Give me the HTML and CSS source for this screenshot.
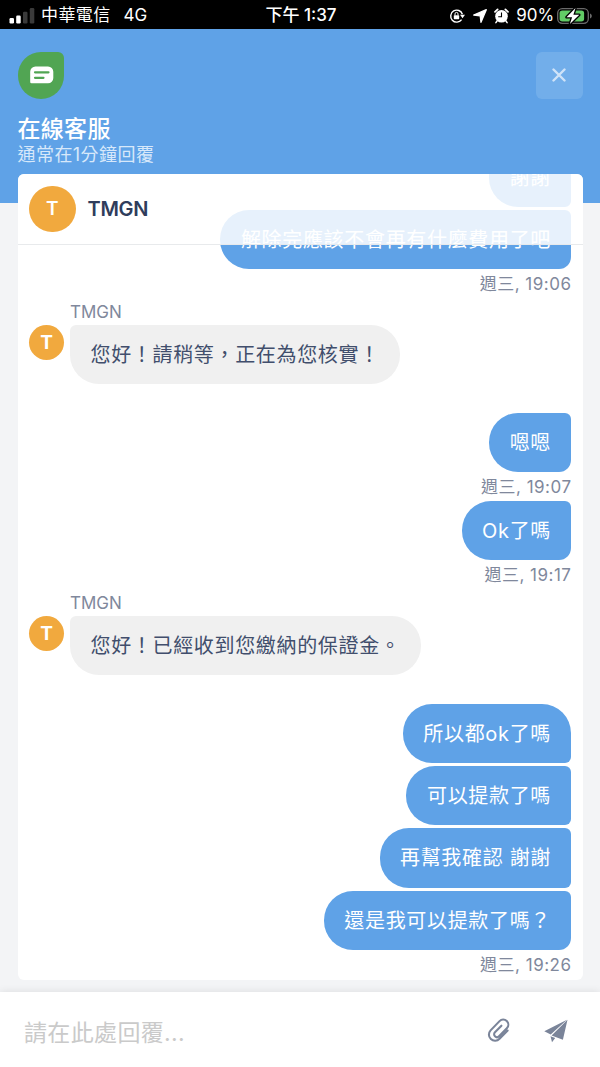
FILE: index.html
```html
<!DOCTYPE html>
<html lang="zh-Hant">
<head>
    <meta charset="UTF-8">
    <meta name="viewport" content="width=device-width, initial-scale=1.0">
    <title>在線客服</title>
    <link rel="stylesheet" href="styles.css">
</head>
<body>
    <div class="status-bar">
        <div class="status-left">
            <svg class="signal" width="26" height="17" viewBox="0 0 26 17">
                <rect x="0.5" y="11" width="4.5" height="5.5" rx="1.2" fill="#fff"/>
                <rect x="7.2" y="8.5" width="4.5" height="8" rx="1.2" fill="#fff"/>
                <rect x="14" y="4.8" width="4.5" height="11.7" rx="1.2" fill="#3a3a3a"/>
                <rect x="20.8" y="1" width="4.5" height="15.5" rx="1.2" fill="#3a3a3a"/>
            </svg>
            <span class="carrier">中華電信</span>
            <span class="network">4G</span>
        </div>
        <div class="status-time">下午 1:37</div>
        <div class="status-right">
            <svg class="lock" width="16" height="16" viewBox="0 0 16 16">
                <path d="M12.6 11.6A6 6 0 1 1 13.4 6.2" fill="none" stroke="#fff" stroke-width="1.4"/>
                <path d="M11 6.8h5l-2.5 3.4z" fill="#fff"/>
                <rect x="4.8" y="7.2" width="5.4" height="4" rx="0.6" fill="#fff"/>
                <path d="M6 7.4V5.9a1.5 1.5 0 0 1 3 0v1.5" fill="none" stroke="#fff" stroke-width="1"/>
            </svg>
            <svg class="location" width="14" height="14" viewBox="0 0 14 14">
                <path d="M13.3 0.7 8 13.3 7.2 6.8 0.7 6z" fill="#fff" stroke="#fff" stroke-width="1.3" stroke-linejoin="round"/>
            </svg>
            <svg class="alarm" width="15" height="16" viewBox="0 0 15 16">
                <circle cx="7.5" cy="8.3" r="6.3" fill="#fff"/>
                <path d="M1 3.8 3.6 1.4M14 3.8 11.4 1.4" stroke="#fff" stroke-width="1.8" stroke-linecap="round"/>
                <path d="M3.2 12.8 1.9 14.6M11.8 12.8l1.3 1.8" stroke="#fff" stroke-width="1.5" stroke-linecap="round"/>
                <path d="M7.5 4.5v4.2H4.2" fill="none" stroke="#000" stroke-width="1.1"/>
            </svg>
            <span class="percent">90%</span>
            <svg class="battery" width="36" height="20" viewBox="0 0 36 20">
                <rect x="0.7" y="2.7" width="30.6" height="14.6" rx="4.5" fill="none" stroke="#6a6a6a" stroke-width="1.3"/>
                <path d="M33 7.5c2.4 0.8 2.4 4.2 0 5z" fill="#6a6a6a"/>
                <rect x="2.6" y="4.6" width="24.5" height="10.8" rx="2.7" fill="#62cc66"/>
                <path d="M18.5 2 9.5 11.2h5.6L12.9 18 22.3 8.8h-5.9z" fill="#fff" stroke="#000" stroke-width="2.6" stroke-linejoin="round" paint-order="stroke"/>
            </svg>
        </div>
    </div>

    <header class="header">
        <div class="header-top">
            <div class="logo">
                <svg width="24" height="18" viewBox="0 0 24 18">
                    <path d="M5.5 0.5H18a5.3 5.3 0 0 1 5.3 5.3V12a5.3 5.3 0 0 1-5.3 5.3H1.5A1.3 1.3 0 0 1 0.2 16V5.8A5.3 5.3 0 0 1 5.5 0.5z" fill="#fff"/>
                    <path d="M5 6.3h13.500M5 11.8h8.500" stroke="#51a553" stroke-width="2.2" stroke-linecap="round"/>
                </svg>
            </div>
            <button class="close" aria-label="關閉">
                <svg width="14" height="14" viewBox="0 0 14 14">
                    <path d="M1.5 1.5l11 11M12.5 1.5l-11 11" stroke="#cfe3f8" stroke-width="2.4" stroke-linecap="round"/>
                </svg>
            </button>
        </div>
        <h1>在線客服</h1>
        <p>通常在1分鐘回覆</p>
    </header>

    <main class="chat">
        <div class="agent-bar">
            <div class="avatar large">T</div>
            <div class="agent-name">TMGN</div>
        </div>

        <div class="messages">
            <div class="bubble mine middle">謝謝</div>
            <div class="bubble mine last">解除完應該不會再有什麼費用了吧</div>
            <div class="time">週三, 19:06</div>

            <div class="sender">TMGN</div>
            <div class="row">
                <div class="avatar">T</div>
                <div class="bubble theirs">您好！請稍等，正在為您核實！</div>
            </div>

            <div class="bubble mine last">嗯嗯</div>
            <div class="time">週三, 19:07</div>
            <div class="bubble mine last">Ok了嗎</div>
            <div class="time">週三, 19:17</div>

            <div class="sender">TMGN</div>
            <div class="row">
                <div class="avatar">T</div>
                <div class="bubble theirs">您好！已經收到您繳納的保證金。</div>
            </div>

            <div class="bubble mine first">所以都ok了嗎</div>
            <div class="bubble mine middle">可以提款了嗎</div>
            <div class="bubble mine middle">再幫我確認 謝謝</div>
            <div class="bubble mine last">還是我可以提款了嗎？</div>
            <div class="time">週三, 19:26</div>
        </div>
    </main>

    <footer class="reply">
        <div class="placeholder">請在此處回覆...</div>
        <svg class="attach" width="23" height="25" viewBox="1 0 22 24">
            <path d="M20.8 12l-7.800 8a5.800 5.800 0 0 1-8.600-8.100l8.600-8.900a4.900 4.900 0 0 1 7 6.900l-7.500 7.700a2.700 2.700 0 0 1-3.900-3.900l6.200-6.300"/>
        </svg>
        <svg class="send" width="24" height="24" viewBox="0 0 24 24">
            <path d="M23 0.800 0.300 12.200l6.400 3.400zM23.500 0.800 7.600 16.600l11.300 4.200zM6.500 17.200l1.500 6 3.200-4.200z"/>
        </svg>
    </footer>
</body>
</html>
```
FILE: styles.css
```css
* {
    box-sizing: border-box;
}
body {
    margin: 0;
    height: 1067px;
    display: flex;
    flex-direction: column;
    overflow: hidden;
    background-color: #f3f4f6;
    font-family: Inter, "Noto Sans CJK TC", sans-serif;
}

/* phone status bar */
.status-bar {
    flex: none;
    height: 29px;
    padding: 0 7px 0 9px;
    display: grid;
    grid-template-columns: 1fr auto 1fr;
    align-items: center;
    background-color: #000;
    color: #fff;
    font-size: 17px;
    line-height: 29px;
    white-space: nowrap;
}
.status-left, .status-right {
    display: flex;
    align-items: center;
}
.status-left { padding-top: 1px; }
.status-right { justify-content: flex-end; padding-top: 1px; }
.carrier {
    margin-left: 6px;
    letter-spacing: 0.4px;
}
.network {
    margin-left: 13px;
    font-size: 17px;
}
.status-time {
    padding-top: 1px;
    font-size: 17px;
    font-weight: 500;
}
.location { margin-left: 8px; }
.alarm { margin-left: 7px; }
.percent {
    margin: 0 3px 0 7px;
    font-size: 17px;
    letter-spacing: -0.1px;
}

.header {
    flex: none;
    height: 174px;
    padding: 23px 17.5px 0;
    background-color: #5fa2e7;
    color: #fff;
}
.header-top {
    display: flex;
    justify-content: space-between;
}
.logo, .close {
    width: 46.5px;
    height: 46.5px;
    display: flex;
    align-items: center;
    justify-content: center;
}
.logo {
    background-color: #51a553;
    border-radius: 50% 6px 50% 50%;
    padding-left: 2px;
}
.close {
    padding: 0;
    border: none;
    border-radius: 6px;
    background-color: #72aeea;
}
.header h1 {
    margin: 18px 0 0;
    font-size: 23px;
    font-weight: 500;
    line-height: 25px;
    letter-spacing: 0.3px;
}
.header p {
    margin: 0;
    color: #d7e8fa;
    font-size: 18px;
    line-height: 25px;
    letter-spacing: 0.45px;
}

/* chat card */
.chat {
    position: relative;
    flex: none;
    height: 806px;
    margin: -29px 17.5px 0;
    border-radius: 6px;
    overflow: hidden;
    background-color: #fff;
}
.agent-bar {
    position: absolute;
    top: 0;
    left: 0;
    right: 0;
    height: 71px;
    padding: 0 11.5px;
    display: flex;
    align-items: center;
    background-color: rgba(255, 255, 255, 0.85);
    border-bottom: 1px solid #e8eaec;
}
.agent-name {
    margin-left: 12px;
    color: #2f3d5c;
    font-size: 20px;
    font-weight: 600;
    letter-spacing: -0.3px;
}
.avatar {
    flex: none;
    width: 35px;
    height: 35px;
    border-radius: 50%;
    background-color: #f1a93e;
    color: #fff;
    font-size: 19px;
    font-weight: 700;
    line-height: 35px;
    text-align: center;
}
.avatar.large {
    width: 46.5px;
    height: 46.5px;
    line-height: 46.5px;
    font-weight: 600;
}
.messages {
    height: 100%;
    padding: 0 11.5px 1px;
    display: flex;
    flex-direction: column;
    justify-content: flex-end;
    align-items: flex-end;
}
.messages > * {
    flex: none;
}
.bubble {
    height: 59.3px;
    padding: 0 20px 0 20.5px;
    font-size: 20px;
    line-height: 60.5px;
    letter-spacing: 0.67px;
    white-space: nowrap;
}
.mine {
    background-color: #5fa2e7;
    color: #fff;
    border-radius: 29px 6px 6px 29px;
}
.mine.first {
    border-radius: 29px 29px 6px 29px;
}
.mine.last {
    border-radius: 29px 6px 12px 29px;
}
.first, .middle {
    margin-bottom: 3px;
}
.theirs {
    background-color: #f0f0f0;
    color: #414e6c;
    border-radius: 6px 29px 29px 29px;
}
.row {
    align-self: flex-start;
    display: flex;
    gap: 6px;
    margin-bottom: 29px;
}
.time {
    height: 29px;
    color: #80889c;
    font-size: 17px;
    line-height: 30px;
    letter-spacing: 0.5px;
    margin-right: -0.5px;
}
.sender {
    align-self: flex-start;
    height: 26.1px;
    margin-left: 41px;
    color: #80889c;
    font-size: 17px;
    line-height: 29px;
}

/* reply box */
.reply {
    flex: 1;
    margin-top: 12px;
    padding: 2px 32px 0 24px;
    display: flex;
    align-items: center;
    background-color: #fff;
    box-shadow: 0 0 8px rgba(0, 0, 0, 0.1);
}
.placeholder {
    flex: 1;
    color: #cacaca;
    font-size: 23px;
    letter-spacing: 0.35px;
    padding-top: 1px;
}
.attach {
    margin-right: 34px;
    fill: none;
    stroke: #7a8499;
    stroke-width: 2;
    stroke-linecap: round;
}
.send {
    fill: #7a8499;
}
```
